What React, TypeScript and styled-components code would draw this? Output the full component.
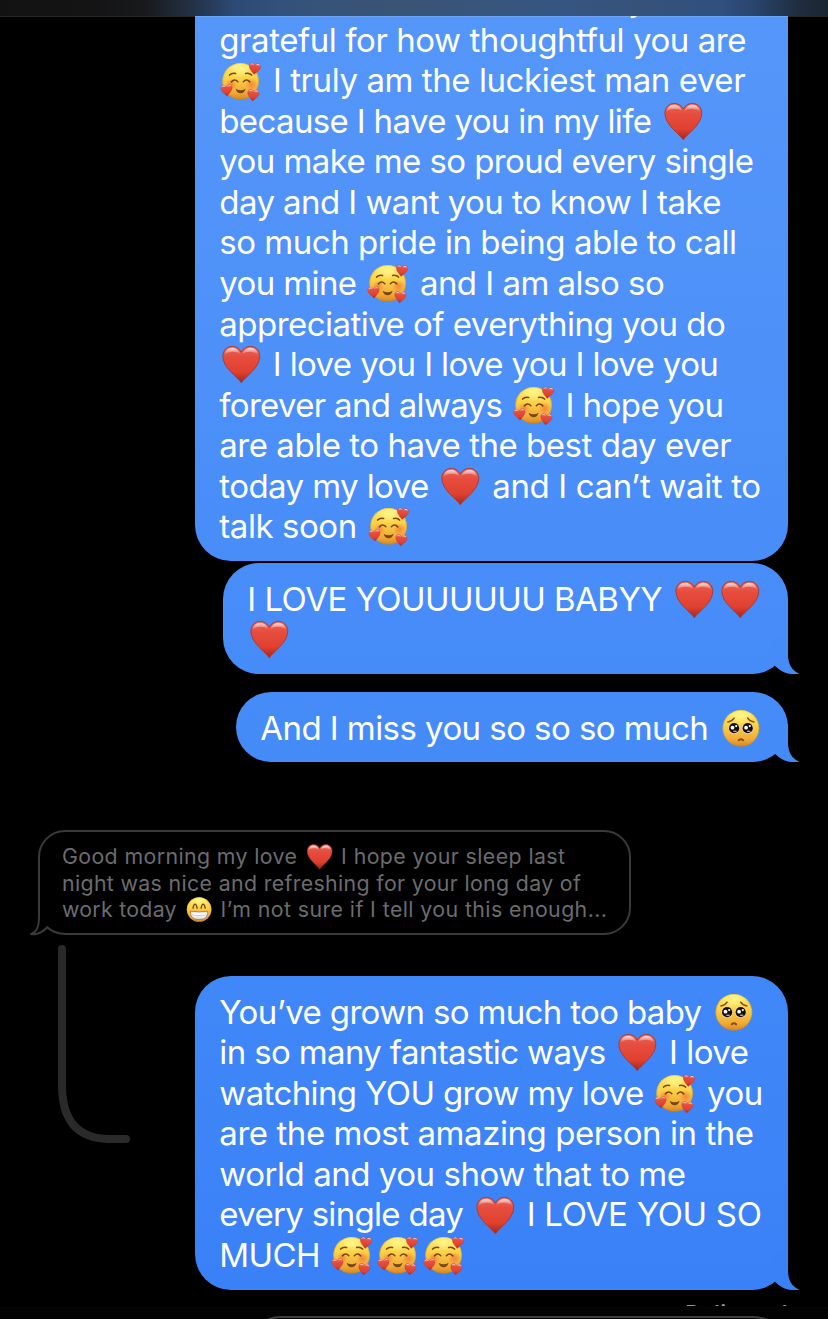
import React from "react";
import styled, { createGlobalStyle } from "styled-components";

const GlobalStyle = createGlobalStyle`
  *, *::before, *::after { box-sizing: border-box; }
  body { margin: 0; background: #000; }
`;

const Screen = styled.main`
  position: relative;
  display: flex;
  flex-direction: column;
  width: 828px;
  height: 1319px;
  overflow: hidden;
  background: #000;
  font-family: Inter, "Liberation Sans", sans-serif;
`;

const NavBar = styled.header`
  position: relative;
  z-index: 1;
  flex: none;
  height: 16px;
  background: linear-gradient(90deg, #121212 0, #141415 90px, #18191b 145px, #243348 195px, #2d4a76 235px, #345279 290px,
    #3a5475 400px, #365581 560px, #365279 640px, #30507f 720px, #2a446c 755px, #202e42 795px, #1b2530 828px);

  &::after {
    content: "";
    position: absolute;
    top: 16px;
    right: 0;
    left: 0;
    height: 1px;
    background: rgba(255, 255, 255, 0.15);
  }
`;

const Thread = styled.section`
  display: flex;
  flex: 1;
  flex-direction: column;
  align-items: flex-end;
  min-height: 0;
  padding: 0 40px 0 38px;
`;

const Bubble = styled.article<{
  $width: number;
  $height: number;
  $gap?: number;
  $from: string;
  $to: string;
  $clipped?: boolean;
}>`
  position: relative;
  display: flex;
  flex: none;
  flex-direction: column;
  justify-content: ${(p) => (p.$clipped ? "flex-end" : "flex-start")};
  width: ${(p) => p.$width}px;
  height: ${(p) => p.$height}px;
  margin-top: ${(p) => p.$gap ?? 0}px;
  padding: 15.7px 0 ${(p) => (p.$clipped ? 14.3 : 0)}px 24.3px;
  border-radius: ${(p) => (p.$clipped ? "0 0 36px 36px" : "36px")};
  background: linear-gradient(${(p) => p.$from}, ${(p) => p.$to});
  color: #fff;
`;

const Line = styled.p<{ $outdent?: boolean }>`
  display: flex;
  flex: none;
  align-items: center;
  height: 40.54px;
  margin: 0 0 0 ${(p) => (p.$outdent ? -1.2 : 0)}px;
  font-size: 33px;
  line-height: 40.54px;
  white-space: pre;
`;

const Run = styled.span<{ $track: number; $indent?: number }>`
  margin-left: ${(p) => p.$indent ?? 0}px;
  letter-spacing: ${(p) => p.$track}px;
`;

const EmojiBox = styled.svg<{ $size: number }>`
  flex: none;
  width: ${(p) => p.$size}px;
  height: ${(p) => p.$size}px;
  margin: -4px 0;
`;

const TailShape = styled.svg`
  position: absolute;
  right: -12px;
  bottom: 0;
  width: 32px;
  height: 40px;
`;

const Quote = styled.article`
  position: relative;
  flex: none;
  align-self: flex-start;
  width: 593px;
  height: 105px;
  margin-top: 68px;
  padding: 10.9px 0 0 22px;
  border: 2px solid #3a3a3c;
  border-radius: 27px;
  color: #6c6c6e;
`;

const QuoteLine = styled(Line)`
  height: 26.65px;
  font-size: 21.3px;
  line-height: 26.65px;
`;

const QuoteTail = styled.svg`
  position: absolute;
  left: -10px;
  bottom: -4px;
  width: 40px;
  height: 34px;
`;

const ReplyRow = styled.div`
  display: flex;
  align-items: flex-start;
  justify-content: space-between;
  flex: none;
  width: 100%;
  padding: 10px 0 0 20px;
`;

const ReplyLine = styled.svg`
  width: 72px;
  height: 198px;
`;

const Receipt = styled.div`
  flex: none;
  margin-top: 13px;
  color: #98989d;
  font-size: 21px;
  font-weight: 600;
  line-height: 21px;
  letter-spacing: 0.7px;
`;

const Composer = styled.footer`
  position: absolute;
  right: 0;
  bottom: 0;
  left: 0;
  height: 13px;
  padding: 10px 40px 0 246px;
  overflow: hidden;
  background: #030303;
`;

const ComposerField = styled.div`
  height: 70px;
  border: 2px solid #3f3f41;
  border-radius: 35px;
`;

function EmojiDefs() {
  return (
    <svg width="0" height="0" style={{ position: "absolute" }} aria-hidden="true">
      <defs>
        <linearGradient id="skin" x1="0" y1="0" x2="0" y2="1">
          <stop offset="0" stopColor="#ffe860" />
          <stop offset="0.4" stopColor="#fbd348" />
          <stop offset="0.8" stopColor="#f1aa38" />
          <stop offset="1" stopColor="#d8871e" />
        </linearGradient>
        <radialGradient id="glow" cx="0.5" cy="0.3" r="0.5">
          <stop offset="0" stopColor="#fff68c" />
          <stop offset="1" stopColor="#fff68c" stopOpacity="0" />
        </radialGradient>
        <radialGradient id="blush">
          <stop offset="0" stopColor="#f4683a" stopOpacity="0.65" />
          <stop offset="1" stopColor="#f4683a" stopOpacity="0" />
        </radialGradient>
        <linearGradient id="red" x1="0" y1="0" x2="0" y2="1">
          <stop offset="0" stopColor="#e9665a" />
          <stop offset="0.3" stopColor="#e64c3d" />
          <stop offset="0.7" stopColor="#e04130" />
          <stop offset="1" stopColor="#a82418" />
        </linearGradient>
        <linearGradient id="shine" x1="0" y1="0" x2="0" y2="1">
          <stop offset="0" stopColor="#fff" stopOpacity="0.8" />
          <stop offset="1" stopColor="#fff" stopOpacity="0" />
        </linearGradient>
        <linearGradient id="teeth" x1="0" y1="0" x2="0" y2="1">
          <stop offset="0" stopColor="#d9dbe0" />
          <stop offset="0.4" stopColor="#fff" />
          <stop offset="1" stopColor="#d5d8de" />
        </linearGradient>
        <g id="heartShape">
          <path
            d="M23 41.8 C19 35.5 4 26.5 4 14.5 C4 8 8.5 4.2 13.6 4.2 C18 4.2 21.4 6.8 23 10.2 C24.6 6.8 28 4.2 32.4 4.2 C37.5 4.2 42 8 42 14.5 C42 26.5 27 35.5 23 41.8 Z"
            fill="url(#red)"
            stroke="#a8372f"
            strokeWidth="0.9"
          />
          <path d="M5.8 13 C6 8.5 9.5 5.6 13.6 5.6 C17.4 5.6 20.6 8 21.6 12 C18 9 10 8.5 5.8 13 Z" fill="url(#shine)" />
          <path d="M40.2 13 C40 8.5 36.5 5.6 32.4 5.6 C28.6 5.6 25.4 8 24.4 12 C28 9 36 8.5 40.2 13 Z" fill="url(#shine)" />
        </g>
        <g id="head">
          <circle cx="23" cy="23" r="18.3" fill="url(#skin)" />
          <circle cx="23" cy="23" r="17.9" fill="none" stroke="#b67a1b" strokeOpacity="0.45" strokeWidth="0.8" />
          <ellipse cx="23" cy="14" rx="14" ry="9" fill="url(#glow)" />
        </g>
      </defs>
    </svg>
  );
}

function Heart({ size = 46 }: { size?: number }) {
  return (
    <EmojiBox $size={size} viewBox="0 0 46 46" role="img" aria-label="red heart">
      <use href="#heartShape" transform="translate(1 1.3) scale(0.97)" />
    </EmojiBox>
  );
}

function Smitten() {
  return (
    <EmojiBox $size={46} viewBox="0.4 -0.3 46 46" role="img" aria-label="smiling face with hearts">
      <use href="#head" />
      <circle cx="13.5" cy="26" r="6" fill="url(#blush)" />
      <circle cx="34" cy="26" r="6.5" fill="url(#blush)" />
      <g fill="none" stroke="#794616" strokeLinecap="round" strokeWidth="1.5">
        <path d="M12 16.8 Q14.500 14.2 18 15.2" />
        <path d="M28 15.2 Q31.500 14.2 34 16.8" />
        <path d="M13.800 23.6 Q17 20 20.2 23.4" strokeWidth="1.6" />
        <path d="M25.800 23.4 Q29 20 32.2 23.6" strokeWidth="1.6" />
      </g>
      <path d="M18 30.400 Q23 33.500 28 30.400 Q26.600 35 23 35 Q19.400 35 18 30.400 Z" fill="#794616" />
      <use href="#heartShape" transform="translate(31 3) rotate(6) scale(0.3)" />
      <use href="#heartShape" transform="translate(1.6 26) rotate(-5) scale(0.3)" />
      <use href="#heartShape" transform="translate(29.4 29.6) rotate(6) scale(0.3)" />
    </EmojiBox>
  );
}

function Pleading() {
  return (
    <EmojiBox $size={46} viewBox="-0.9 -0.3 46 46" role="img" aria-label="pleading face">
      <use href="#head" />
      <g fill="none" stroke="#885018" strokeLinecap="round" strokeWidth="1.5">
        <path d="M10 16.6 Q14.300 15.8 16.2 12.8" />
        <path d="M29.8 12.8 Q31.700 15.8 36 16.6" />
        <path d="M20.8 35 Q23 32.8 25.2 35" strokeWidth="2" />
      </g>
      {[16.2, 29.8].map((x) => (
        <g key={x}>
          <circle cx={x} cy="23" r="5.5" fill="#e9e4e0" />
          <circle cx={x} cy="22.9" r="5.1" fill="#170e0b" />
          <circle cx={x - 1.6} cy="22.4" r="1.9" fill="#fff" />
          <circle cx={x + 2.1} cy="20.8" r="1.1" fill="#fff" />
          <ellipse cx={x + 0.9} cy="25.9" rx="2" ry="0.8" fill="#b9b0ac" />
        </g>
      ))}
    </EmojiBox>
  );
}

function Grin() {
  return (
    <EmojiBox $size={31} viewBox="-0.9 0 46 46" role="img" aria-label="beaming face">
      <use href="#head" />
      <g fill="none" stroke="#74451a" strokeLinecap="round" strokeWidth="2">
        <path d="M14 21 Q15 15 17 15 Q19 15 20 21" />
        <path d="M26 21 Q27 15 29 15 Q31 15 32 21" />
      </g>
      <path d="M10 25.5 Q23 27.5 36 25.5 Q36.5 38 23 38 Q9.5 38 10 25.5 Z" fill="url(#teeth)" stroke="#8f6a3a" strokeWidth="1" />
      <path d="M11 31 Q23 33 35 31" fill="none" stroke="#a9abb2" strokeWidth="0.9" />
    </EmojiBox>
  );
}

function Tail({ color }: { color: string }) {
  return (
    <TailShape viewBox="0 0 32 40" aria-hidden="true">
      <path
        d="M5 2 H20 V21 C20.100 30 24 37 31.500 39.600 C22 41.500 13 38 7.200 31.900 C4 28 4 16 5 2 Z"
        fill={color}
      />
    </TailShape>
  );
}

export default function App() {
  return (
    <Screen>
      <GlobalStyle />
      <EmojiDefs />
      <NavBar />
      <Thread>
        <Bubble $width={593} $height={545} $from="#5596f9" $to="#488df8" $clipped>
          <Line><Run $track={0} $indent={409}>y</Run></Line>
          <Line><Run $track={-0.44}>grateful for how thoughtful you are</Run></Line>
          <Line $outdent><Smitten /><Run $track={-0.43}> I truly am the luckiest man ever</Run></Line>
          <Line><Run $track={-0.642}>because I have you in my life </Run><Heart /></Line>
          <Line><Run $track={-0.59}>you make me so proud every single</Run></Line>
          <Line><Run $track={-0.565}>day and I want you to know I take</Run></Line>
          <Line><Run $track={-0.48}>so much pride in being able to call</Run></Line>
          <Line><Run $track={-0.62}>you mine </Run><Smitten /><Run $track={-0.52}> and I am also so</Run></Line>
          <Line><Run $track={-0.53}>appreciative of everything you do</Run></Line>
          <Line $outdent><Heart /><Run $track={-0.62}> I love you I love you I love you</Run></Line>
          <Line><Run $track={-0.7}>forever and always </Run><Smitten /><Run $track={-0.54}> I hope you</Run></Line>
          <Line><Run $track={-0.463}>are able to have the best day ever</Run></Line>
          <Line><Run $track={-0.58}>today my love </Run><Heart /><Run $track={-0.358}> and I can’t wait to</Run></Line>
          <Line><Run $track={-0.44}>talk soon </Run><Smitten /></Line>
        </Bubble>

        <Bubble $width={565} $height={111} $gap={2} $from="#488df8" $to="#468cf8">
          <Line><Run $track={-0.518}>I LOVE YOUUUUUU BABYY </Run><Heart /><Heart /></Line>
          <Line $outdent><Heart /></Line>
          <Tail color="#468cf8" />
        </Bubble>

        <Bubble $width={552} $height={70} $gap={18} $from="#468cf8" $to="#458bf8">
          <Line><Run $track={-0.56}>And I miss you so so so much </Run><Pleading /></Line>
          <Tail color="#458bf8" />
        </Bubble>

        <Quote>
          <QuoteLine><Run $track={0.396}>Good morning my love </Run><Heart size={31} /><Run $track={0.42}> I hope your sleep last</Run></QuoteLine>
          <QuoteLine><Run $track={0.358}>night was nice and refreshing for your long day of</Run></QuoteLine>
          <QuoteLine><Run $track={0.28}>work today </Run><Grin /><Run $track={0.43}> I’m not sure if I tell you this enough...</Run></QuoteLine>
          <QuoteTail viewBox="0 0 40 34" aria-hidden="true">
            <path d="M7 4 H25 V24 H35 V34 H7 Z" fill="#000" />
            <path
              d="M9 3 V15 C9 24 6.500 29 1.500 31 C7 32 12.500 29.500 17.300 24.300 C21 28 26 31 36 31"
              fill="none"
              stroke="#3a3a3c"
              strokeWidth="2"
            />
          </QuoteTail>
        </Quote>

        <ReplyRow>
          <ReplyLine viewBox="0 0 72 198" aria-hidden="true">
            <path
              d="M4 4 V140 C4 176 20 193 50 194 H68"
              fill="none"
              stroke="#2a2a2a"
              strokeWidth="8"
              strokeLinecap="round"
            />
          </ReplyLine>
          <Bubble $width={593} $height={314} $gap={31} $from="#4088f8" $to="#3a81f7">
            <Line><Run $track={-0.66}>You’ve grown so much too baby </Run><Pleading /></Line>
            <Line><Run $track={-0.633}>in so many fantastic ways </Run><Heart /><Run $track={-0.5}> I love</Run></Line>
            <Line><Run $track={-0.62}>watching YOU grow my love </Run><Smitten /><Run $track={-0.5}> you</Run></Line>
            <Line><Run $track={-0.44}>are the most amazing person in the</Run></Line>
            <Line><Run $track={-0.46}>world and you show that to me</Run></Line>
            <Line><Run $track={-0.694}>every single day </Run><Heart /><Run $track={-0.284}> I LOVE YOU SO</Run></Line>
            <Line><Run $track={-0.6}>MUCH </Run><Smitten /><Smitten /><Smitten /></Line>
            <Tail color="#3a81f7" />
          </Bubble>
        </ReplyRow>
        <Receipt>Delivered</Receipt>
      </Thread>
      <Composer><ComposerField /></Composer>
    </Screen>
  );
}
